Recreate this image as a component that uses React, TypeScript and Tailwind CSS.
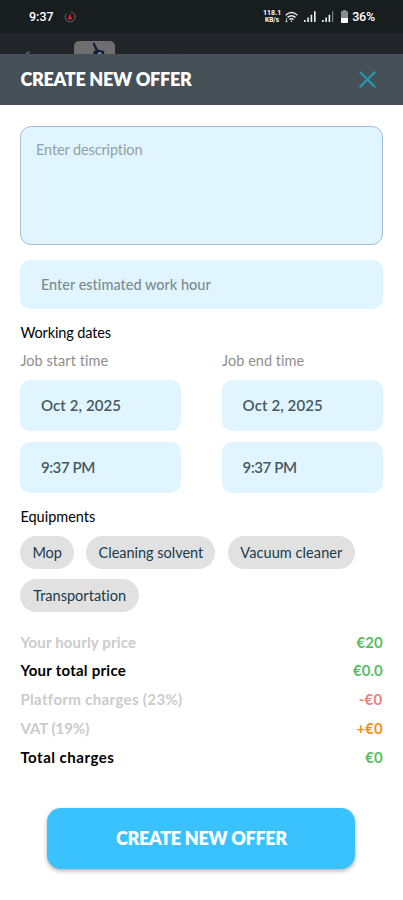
import { X } from 'lucide-react';

const equipments = [
  { name: 'Mop', className: 'w-[53.5px] tracking-[-0.1px]' },
  { name: 'Cleaning solvent', className: 'w-[129px] tracking-[-0.02px]' },
  { name: 'Vacuum cleaner', className: 'w-[127px] tracking-[0.08px]' },
  { name: 'Transportation', className: 'w-[118.5px] tracking-[0.02px]' },
];

const prices = [
  { label: 'Your hourly price', value: '€20', labelClass: 'text-[#cbcbcb] tracking-[0.15px]', valueClass: 'text-[#56bd68]' },
  { label: 'Your total price', value: '€0.0', labelClass: 'text-black tracking-[0.25px]', valueClass: 'text-[#56bd68]' },
  { label: 'Platform charges (23%)', value: '-€0', labelClass: 'text-[#cbcbcb] tracking-[0.35px]', valueClass: 'text-[#ec7f80] tracking-[0.3px]' },
  { label: 'VAT (19%)', value: '+€0', labelClass: 'text-[#cbcbcb]', valueClass: 'text-[#ee9020]' },
  { label: 'Total charges', value: '€0', labelClass: 'text-black tracking-[0.5px]', valueClass: 'text-[#56bd68]' },
];

function StatusBar() {
  return (
    <div className="flex h-[33px] items-center bg-[#181d20] pl-[29px] pr-[28px] font-['Roboto',sans-serif] text-white">
      <span className="text-[12.5px] font-medium leading-4">9:37</span>
      <svg className="ml-[10px] h-3 w-3" viewBox="0 0 12 12" fill="none">
        <path d="M7 1A5 5 0 1 1 2.4 2.6" stroke="#626a6d" />
        <path d="M7 1A5 5 0 0 1 11 6" stroke="#843c43" />
        <path d="M6 2.8 7.2 5.5 8.2 8.5H3.8L4.8 5.5Z" fill="#d51f35" />
      </svg>
      <div className="ml-auto flex items-center">
        <div className="text-center text-[7px] font-bold leading-[7px]">
          <div>118.1</div>
          <div className="text-[6.5px]">KB/s</div>
        </div>
        <svg className="ml-[4px] h-[12px] w-[13px]" viewBox="0 0 13 12" fill="none" stroke="#e8eaeb" strokeWidth="1.4">
          <path d="M.6 4.2Q6.5-1 12.4 4.2M2.5 6.4Q6.5 3 10.5 6.4M4.4 8.5Q6.5 6.9 8.6 8.5" />
          <circle cx="6.5" cy="10.2" r=".8" fill="#e8eaeb" stroke="none" />
          <path d="M1.5 7v4M.4 9.8l1.1 1.3 1.1-1.3" strokeWidth=".7" />
        </svg>
        <svg className="ml-[6px] h-[11px] w-[12px]" viewBox="0 0 12 11" fill="#f1f2f2">
          <path d="M0 9h1.6v2H0zM3.3 6.5h1.6V11H3.3zM6.6 3.7h1.6V11H6.6zM10 .3h1.6V11H10z" />
        </svg>
        <svg className="ml-[6px] h-[11px] w-[12px]" viewBox="0 0 12 11" fill="#f1f2f2">
          <path d="M0 9h1.6v2H0zM3.3 6.5h1.6V11H3.3zM6.6 3.7h1.6V11H6.6z" />
          <path d="M10 .3h1.3V11H10z" fill="#73787a" />
        </svg>
        <svg className="ml-[7px] h-[13px] w-[7px]" viewBox="0 0 7 13">
          <path d="M2 0h3v1h1q1 0 1 1v6H0V2q0-1 1-1h1z" fill="#8b8e90" />
          <path d="M0 8h7v4q0 1-1 1H1q-1 0-1-1z" fill="#fff" />
        </svg>
        <span className="ml-[4px] text-[12.5px] font-medium leading-4 tracking-[-0.2px]">36%</span>
      </div>
    </div>
  );
}

function TimeColumn({ label, labelClass }: { label: string; labelClass: string }) {
  return (
    <div className="w-[160.5px]">
      <div className={`h-[29px] text-[14.5px] leading-5 text-[#8f8f8f] ${labelClass}`}>{label}</div>
      <div className="flex h-[51px] items-center rounded-[10px] bg-[#e0f5ff] pl-[20.5px] text-[15px] font-semibold tracking-[0.1px] text-[#465860]">
        Oct 2, 2025
      </div>
      <div className="mt-[10.5px] flex h-[51px] items-center rounded-[10px] bg-[#e0f5ff] pl-[20.5px] text-[15px] font-semibold tracking-[-0.4px] text-[#465860]">
        9:37 PM
      </div>
    </div>
  );
}

export default function App() {
  return (
    <div className="h-[900px] w-[403px] overflow-hidden bg-white font-['Lato',sans-serif] [font-variant-ligatures:none]">
      <StatusBar />

      {/* Screen behind the sheet */}
      <div className="flex h-[21px] items-end overflow-hidden bg-[#212529]">
        <svg className="h-[21px] w-[403px]" viewBox="0 0 403 21" fill="none">
          <path d="M26 21 29.5 19" stroke="#616b70" strokeWidth="1.5" />
          <rect x="74" y="8" width="41" height="30" rx="5" fill="#6e6e6e" />
          <path d="M92.5 10.5l2-1 3.5 7.5-2 1z" fill="#141c3c" />
          <path d="M94 18q3-2.5 6-1l4 1 .5 3h-3l-2-2-2.5 2h-4z" fill="#141c3c" />
          <path d="M98 20l2-1.2 2 2.2h-4z" fill="#858b93" />
          <path d="M174 21h4" stroke="#353c40" />
        </svg>
      </div>

      <header className="flex h-[51px] items-center justify-between bg-[#455057] pl-[20.5px] pr-[21.5px]">
        <h1 className="text-[18px] font-extrabold tracking-[-0.3px] text-white">CREATE NEW OFFER</h1>
        <X className="h-[29px] w-[29px] text-[#2798b8]" strokeWidth={1.7} />
      </header>

      <main className="px-[20.4px] pt-[21px]">
        <div className="-mx-[0.4px] h-[119px] rounded-[11px] border border-[#a5bddd] bg-[#e0f5ff] px-[15px] pt-[13px] text-[14.5px] leading-5 tracking-[-0.12px] text-[#93a0a7]">
          Enter description
        </div>
        <div className="mt-[15px] flex h-[49px] items-center rounded-[10px] bg-[#e0f5ff] pl-[20.5px] text-[14.5px] font-medium text-[#7e8a8e]">
          Enter estimated work hour
        </div>

        <h2 className="mt-[14px] text-[14.5px] leading-5 tracking-[-0.13px] text-black">Working dates</h2>
        <div className="mt-[8px] flex justify-between">
          <TimeColumn label="Job start time" labelClass="tracking-[0.05px]" />
          <TimeColumn label="Job end time" labelClass="tracking-[0.03px]" />
        </div>

        <h2 className="mt-[14.5px] text-[14.5px] leading-5 text-black">Equipments</h2>
        <div className="mt-[9px] flex flex-wrap gap-x-[12.5px] gap-y-[10px]">
          {equipments.map((item) => (
            <div
              key={item.name}
              className={`flex h-[33px] items-center justify-center whitespace-nowrap rounded-full bg-[#e1e1e1] text-[14.5px] text-[#173b4b] ${item.className}`}
            >
              {item.name}
            </div>
          ))}
        </div>

        <div className="mt-[15.5px]">
          {prices.map((row) => (
            <div key={row.label} className="flex h-[28.8px] items-center justify-between text-[15px] font-bold">
              <span className={row.labelClass}>{row.label}</span>
              <span className={row.valueClass}>{row.value}</span>
            </div>
          ))}
        </div>

        <button className="ml-[27px] mt-[37px] flex h-[61px] w-[308px] items-center justify-center rounded-[14px] bg-[#39c2ff] text-[18px] font-extrabold tracking-[-0.3px] text-white shadow-[0_2px_4px_rgba(0,0,0,0.3)]">
          CREATE NEW OFFER
        </button>
      </main>
    </div>
  );
}
